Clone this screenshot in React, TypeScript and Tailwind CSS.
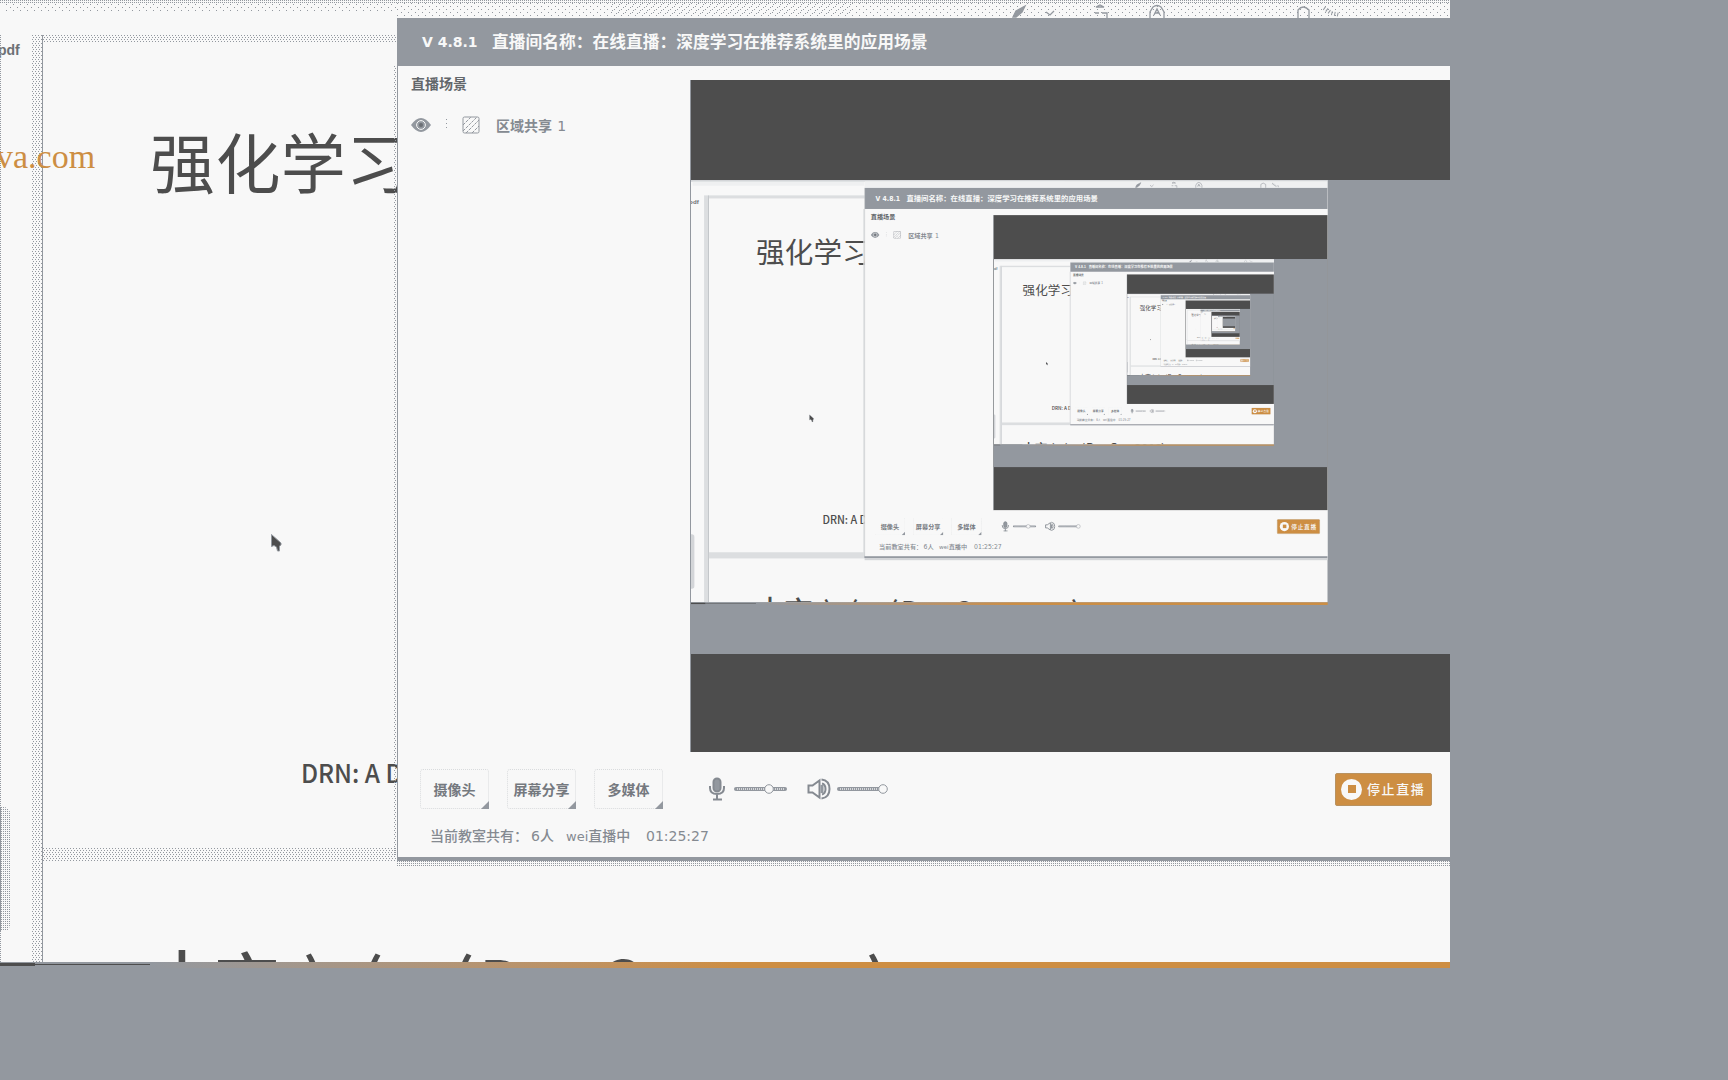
const DOT_PATTERNS = {
  dense:
    "bg-[conic-gradient(from_270deg_at_1px_1px,#93989f_90deg,transparent_0)] bg-[length:2px_2px]",
  medium:
    "bg-[conic-gradient(from_270deg_at_1px_1px,#93989f_90deg,transparent_0),conic-gradient(from_270deg_at_1px_1px,#93989f_90deg,transparent_0)] bg-[length:3px_4px] bg-[position:0_0,1px_2px]",
  sparse:
    "bg-[conic-gradient(from_270deg_at_1px_1px,#93989f_90deg,transparent_0),conic-gradient(from_270deg_at_1px_1px,#93989f_90deg,transparent_0)] bg-[length:7px_6px] bg-[position:0_0,4px_3px]",
};

// Fine dots merge into a plain tint once the screen is scaled down.
const FLAT_TINTS = {
  dense: "bg-[#d3d5d8]",
  medium: "bg-[#dcdee0]",
  sparse: "bg-[#eff0f1]",
};

const MAX_DEPTH = 5;

function Dots({
  tone,
  depth,
  className,
}: {
  tone: keyof typeof DOT_PATTERNS;
  depth: number;
  className: string;
}) {
  const fill = depth === 0 ? DOT_PATTERNS[tone] : FLAT_TINTS[tone];
  return <div className={`${className} ${fill}`} />;
}

function Toolbar({ depth }: { depth: number }) {
  return (
    <div className="relative h-[35px] shrink-0">
      <Dots tone="dense" depth={depth} className="h-[4px]" />
      <Dots tone="sparse" depth={depth} className="ml-[6px] h-[9px] w-[390px]" />
      <Dots
        tone="sparse"
        depth={depth}
        className="absolute top-[3px] right-0 h-[15px] w-[1053px]"
      />
      <Dots
        tone="sparse"
        depth={depth}
        className="absolute top-[4px] left-[612px] h-[10px] w-[240px]"
      />
      <svg
        className="absolute top-0 left-[1005px]"
        width="345"
        height="18"
        fill="none"
        stroke="#93989f"
        strokeWidth="1.3"
      >
        <path d="M8 17l3-6 9-5-3 6-6 5z" fill="#93989f" />
        <path d="M41 12l4 3 4-4" />
        <path d="M91 7l4-2 4 2zM90 13h4M97 13h5v5" />
        <path d="M145 18v-6l3-5q4-3 8 0l3 5v6M149 15l3-6 3 6M150 13h4" />
        <path d="M293 18v-8q5-6 11 0v8" />
        <path d="M319 8l7 5 9 2" strokeDasharray="1 2" strokeWidth="4" />
      </svg>
    </div>
  );
}

function BottomLine() {
  return (
    <div className="flex h-[25px] w-full overflow-hidden pt-[9px] pl-[106px] font-['Noto_Sans_CJK_SC',sans-serif] text-[66px] leading-[66px] font-medium whitespace-nowrap text-[#4d4d4d]">
      <span className="-mt-[2px] w-[65px] shrink-0">本</span>
      <span className="w-[89px] shrink-0">京</span>
      <span className="w-[57px] shrink-0">)</span>
      <span className="w-[91px] shrink-0">(</span>
      <span className="w-[28px] shrink-0">(</span>
      <span className="mt-[1px] w-[119px] shrink-0">D</span>
      <span className="mt-[1px] w-[131px] shrink-0">C</span>
      <span className="mt-[3px] w-[137px] shrink-0 text-[62px]">2018</span>
      <span className="shrink-0">)</span>
    </div>
  );
}

function DocumentView({ depth }: { depth: number }) {
  return (
    <div className="flex h-[962px] flex-col overflow-hidden bg-[#f8f8f8]">
      <Toolbar depth={depth} />
      <div className="flex min-h-0 flex-1">
        <div className="relative w-[32px] shrink-0 overflow-hidden">
          <Dots tone="dense" depth={depth} className="absolute inset-y-0 left-0 w-[2px]" />
          <div className="h-[30px] pt-[6px] font-['Liberation_Sans',sans-serif] text-[14px] leading-[18px] font-bold text-[#6c7075]">
            <span className="-ml-[2px]">pdf</span>
          </div>
          <Dots
            tone="dense"
            depth={depth}
            className="absolute top-[772px] left-0 h-[124px] w-[10px] rounded-r-[6px] border-l border-[#93989f]"
          />
        </div>
        <Dots tone="medium" depth={depth} className="w-[10px] shrink-0" />
        <div className="flex flex-1 flex-col border-l border-[#93989f]">
          <Dots tone="medium" depth={depth} className="h-[7px] shrink-0" />
          <div className="relative h-[806px] shrink-0">
            {depth === 0 && (
              <div className="absolute top-[95px] -left-[47px] font-['Liberation_Serif',serif] text-[34px] leading-[40px] text-[#cd8e43]">
                va.com
              </div>
            )}
            <h1 className="pt-[79px] pl-[107px] font-['Noto_Sans_CJK_SC',sans-serif] text-[65px] leading-[78px] tracking-[0.4px] whitespace-nowrap text-[#4d4d4d]">
              强化学习
            </h1>
            <svg className="absolute top-[492px] left-[228px]" width="11" height="18">
              <path
                d="M.5.5v12l2.500-1 2.500 1.500 1 4h2v-5l1.500-1V9z"
                fill="#4d4d4d"
                stroke="#93989f"
              />
            </svg>
            <div className="absolute top-[712px] left-[258px] origin-left scale-x-[0.94] font-['Noto_Sans_CJK_SC',sans-serif] text-[26px] leading-[36px] font-medium whitespace-nowrap text-[#4d4d4d]">
              DRN: A D
            </div>
          </div>
          <Dots tone="medium" depth={depth} className="h-[14px] shrink-0" />
          <div className="flex h-[100px] shrink-0 flex-col justify-end">
            <BottomLine />
          </div>
        </div>
      </div>
    </div>
  );
}

function SceneRow() {
  return (
    <div className="flex h-[20px] items-center">
      <svg width="20" height="14" viewBox="0 0 20 14">
        <path d="M0 7q10-14 20 0q-10 14-20 0z" fill="#93989f" />
        <circle cx="10" cy="7" r="4.4" fill="none" stroke="#f8f8f8" />
        <circle cx="10" cy="7" r="2" fill="#6c7075" />
      </svg>
      <svg className="ml-[14px]" width="3" height="14">
        <path d="M1.500 1v12" stroke="#93989f" strokeWidth="1" strokeDasharray="1 3" />
      </svg>
      <svg
        className="ml-[14px]"
        width="18"
        height="18"
        fill="none"
        stroke="#93989f"
        strokeWidth="1"
      >
        <rect x="1" y="1" width="16" height="16" rx="1.5" />
        <path d="M1 9l8-8M1 15L15 1M4 17L17 4M10 17l7-7" strokeDasharray="3 1" />
      </svg>
      <span className="ml-[16px] text-[14px] leading-[20px] font-bold whitespace-pre text-[#858a91]">
        区域共享 <span className="ml-[2px] font-['DejaVu_Sans',sans-serif] font-normal">1</span>
      </span>
    </div>
  );
}

function ToolButton({ label }: { label: string }) {
  return (
    <button className="relative flex h-[40px] w-[69px] items-center justify-center rounded-[3px] border border-dotted border-[#d9dbdd] text-[14px] font-bold whitespace-nowrap text-[#75797f]">
      {label}
      <svg className="absolute -right-px -bottom-px" width="8" height="8">
        <path d="M8 0v8H0z" fill="#93989f" />
      </svg>
    </button>
  );
}

function Slider({ end, knob }: { end: number; knob: number }) {
  return (
    <svg width="56" height="12">
      <path d={`M2 6H${end}`} stroke="#93989f" strokeWidth="4" strokeLinecap="round" />
      <path d={`M3 6H${end}`} stroke="#d5d7da" strokeWidth="2" strokeDasharray="1 1" />
      <circle cx={knob} cy="6" r="4.3" fill="#f8f8f8" stroke="#93989f" />
    </svg>
  );
}

function Controls() {
  return (
    <div className="flex h-[40px] items-center">
      <div className="ml-[22px] flex gap-[18px]">
        <ToolButton label="摄像头" />
        <ToolButton label="屏幕分享" />
        <ToolButton label="多媒体" />
      </div>
      <svg
        className="ml-[45px]"
        width="19"
        height="24"
        fill="none"
        stroke="#858a91"
        strokeWidth="2"
      >
        <rect x="5.5" y="1.5" width="7" height="13" rx="3.5" fill="#93989f" />
        <path d="M2 9v2q0 6 7 6t7-6V9M9 17v6M5 22.500h9" />
      </svg>
      <div className="ml-[7px] flex">
        <Slider end={51} knob={35} />
      </div>
      <svg
        className="ml-[17px]"
        width="24"
        height="24"
        fill="none"
        stroke="#858a91"
        strokeWidth="2"
      >
        <path d="M1.500 8.500h4l7-5v17l-7-5h-4z" />
        <path d="M14.500 2.500q8 1 8 9.500t-8 9.500M15 6.500q3.500 1 3.500 5.500T15 17.500" />
        <path d="M15 8v8" strokeWidth="3" stroke="#93989f" />
      </svg>
      <div className="ml-[6px] flex">
        <Slider end={44} knob={46} />
      </div>
      <button className="mr-[18px] ml-auto flex h-[33px] w-[97px] items-center rounded-[2px] border border-[#b99260] bg-[#cd8e43] pl-[5px] text-[13px] font-medium tracking-[1.6px] whitespace-nowrap text-[#f8f8f8]">
        <span className="mr-[5px] flex size-[21px] items-center justify-center rounded-full bg-[#f8f8f8]">
          <span className="size-[8px] bg-[#cd8e43]" />
        </span>
        停止直播
      </button>
    </div>
  );
}

function StatusLine() {
  return (
    <div className="mt-[15px] ml-[32px] flex h-[24px] items-center font-['DejaVu_Sans','Noto_Sans_CJK_SC',sans-serif] text-[14px] leading-[24px] font-medium whitespace-nowrap text-[#858a91]">
      <span className="w-[101px]">当前教室共有：</span>
      <span className="w-[35px]">6人</span>
      <span className="w-[80px]">
        <span className="text-[13px]">wei</span>直播中
      </span>
      <span>01:25:27</span>
    </div>
  );
}

function LiveWindow({ depth }: { depth: number }) {
  return (
    <section className="flex h-[843px] w-[1053px] flex-col border-b-4 border-l border-[#93989f] bg-[#f8f8f8] font-['Noto_Sans_CJK_SC',sans-serif]">
      <header className="flex h-[48px] shrink-0 items-center bg-[#93989f] pl-[24px] text-[16.75px] font-bold whitespace-nowrap text-[#f8f8f8]">
        <span className="w-[70px] font-['DejaVu_Sans',sans-serif] text-[14px]">V 4.8.1</span>
        <span>直播间名称：在线直播：深度学习在推荐系统里的应用场景</span>
      </header>
      <div className="flex h-[686px] shrink-0">
        <aside className="w-[292px] shrink-0 pt-[7px] pl-[13px]">
          <h2 className="text-[14px] leading-[20px] font-bold text-[#63676b]">直播场景</h2>
          <div className="mt-[22px]">
            <SceneRow />
          </div>
        </aside>
        <div className="mt-[14px] h-[672px] w-[760px] shrink-0 overflow-hidden border-l border-[#93989f] bg-[#4d4d4d] pt-[100px] pb-[98px]">
          <div className="relative h-[474px] overflow-hidden bg-[#93989f]">
            {depth < MAX_DEPTH && (
              <div className="absolute top-0 -left-px origin-top-left scale-x-[0.4398] scale-y-[0.439]">
                <Screen depth={depth + 1} />
              </div>
            )}
          </div>
        </div>
      </div>
      <div className="mt-[17px]">
        <Controls />
      </div>
      <StatusLine />
    </section>
  );
}

function Screen({ depth }: { depth: number }) {
  return (
    <div className="relative h-[1080px] w-[1728px] overflow-hidden bg-[#93989f]">
      <div className="relative w-[1450px] overflow-hidden">
        <DocumentView depth={depth} />
        <div className="absolute top-[18px] left-[397px]">
          <LiveWindow depth={depth} />
          <Dots tone="dense" depth={depth} className="h-[5px]" />
        </div>
        <Dots
          tone="medium"
          depth={depth}
          className="absolute top-[66px] left-[394px] h-[790px] w-[3px]"
        />
      </div>
      <div className="flex h-[6px] w-[1450px]">
        <div className="mt-[1px] h-[3px] w-[35px] bg-[#4d4d4d]" />
        <div className="mt-[2px] h-px w-[115px] bg-[#4d4d4d]" />
        <div className="flex-1 bg-linear-to-r from-[#93989f] via-[#cd8e43] via-45% to-[#cd8e43]" />
      </div>
    </div>
  );
}

export default function App() {
  return <Screen depth={0} />;
}
